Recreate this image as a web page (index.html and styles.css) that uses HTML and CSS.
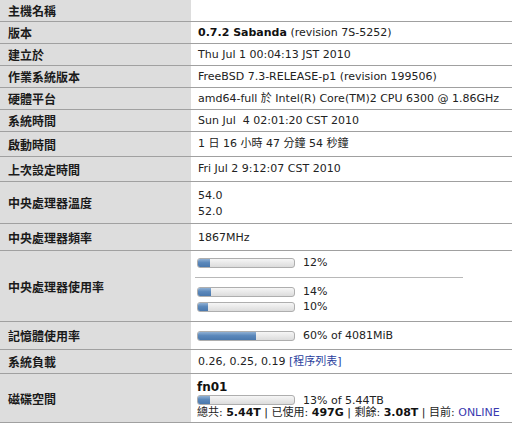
FILE: index.html
```html
<!DOCTYPE html>
<html lang="zh-Hant">
<head>
<meta charset="utf-8">
<title>系統資訊</title>
<link rel="stylesheet" href="styles.css">
</head>
<body>
<div class="sysinfo">
  <div class="row"><div class="label">主機名稱</div><div class="value"></div></div>
  <div class="row"><div class="label">版本</div><div class="value"><b>0.7.2 Sabanda</b> (revision 7S-5252)</div></div>
  <div class="row"><div class="label">建立於</div><div class="value">Thu Jul 1 00:04:13 JST 2010</div></div>
  <div class="row"><div class="label">作業系統版本</div><div class="value">FreeBSD 7.3-RELEASE-p1 (revision 199506)</div></div>
  <div class="row"><div class="label">硬體平台</div><div class="value">amd64-full 於 Intel(R) Core(TM)2 CPU 6300 @ 1.86GHz</div></div>
  <div class="row"><div class="label">系統時間</div><div class="value">Sun Jul&nbsp; 4 02:01:20 CST 2010</div></div>
  <div class="row row-roomy"><div class="label">啟動時間</div><div class="value">1 日 16 小時 47 分鐘 54 秒鐘</div></div>
  <div class="row row-roomy"><div class="label">上次設定時間</div><div class="value">Fri Jul 2 9:12:07 CST 2010</div></div>
  <div class="row"><div class="label">中央處理器溫度</div><div class="value value-temp"><div class="line">54.0</div><div class="line">52.0</div></div></div>
  <div class="row"><div class="label">中央處理器頻率</div><div class="value value-freq">1867MHz</div></div>
  <div class="row"><div class="label">中央處理器使用率</div>
    <div class="value value-cpu">
      <div class="barline"><div class="bar"><div class="fill" style="width:12%"></div></div><span>12%</span></div>
      <div class="sep"></div>
      <div class="barline"><div class="bar"><div class="fill" style="width:14%"></div></div><span>14%</span></div>
      <div class="barline"><div class="bar"><div class="fill" style="width:10%"></div></div><span>10%</span></div>
    </div>
  </div>
  <div class="row"><div class="label">記憶體使用率</div>
    <div class="value value-mem">
      <div class="barline"><div class="bar"><div class="fill" style="width:60%"></div></div><span>60% of 4081MiB</span></div>
    </div>
  </div>
  <div class="row"><div class="label">系統負載</div><div class="value value-load">0.26, 0.25, 0.19 <a class="link" href="#">[程序列表]</a></div></div>
  <div class="row"><div class="label">磁碟空間</div>
    <div class="value value-disk">
      <div class="disk-name">fn01</div>
      <div class="barline barline-tight"><div class="bar"><div class="fill" style="width:13%"></div></div><span>13% of 5.44TB</span></div>
      <div class="disk-stats">總共: <b>5.44T</b> | 已使用: <b>497G</b> | 剩餘: <b>3.08T</b> | 目前: <span class="online">ONLINE</span></div>
    </div>
  </div>
</div>
</body>
</html>
```
FILE: styles.css
```css
html, body {
  margin: 0;
  padding: 0;
  background: #ffffff;
}

body {
  font-family: "DejaVu Sans", "Noto Sans CJK TC", sans-serif;
  font-size: 11px;
  color: #222222;
}

.sysinfo {
  width: 512px;
}

.row {
  display: grid;
  grid-template-columns: 191px 1fr;
  border-bottom: 1px solid #a0a0a0;
}

.label {
  background: #dddddd;
  display: flex;
  align-items: center;
  padding: 0 8px;
  font-family: "Noto Sans CJK TC", sans-serif;
  font-weight: 700;
  font-size: 12px;
  color: #1a1a1a;
  min-height: 21px;
}

.value {
  padding: 4px 7px;
  line-height: 13px;
  white-space: nowrap;
}

.row-roomy .value {
  padding: 5px 7px 6px;
}

.value b {
  font-weight: 700;
  color: #111111;
}

.value-temp {
  padding: 6px 7px 3px;
}

.value-temp .line {
  line-height: 16px;
}

.value-freq {
  padding: 7px 7px 6px;
}

.value-cpu {
  padding: 4px 7px 7px 6px;
}

.value-mem {
  padding: 6px 7px 6px 6px;
}

.value-load {
  padding: 5px 7px 5px;
}

.value-disk {
  padding: 6px 7px 3px 6px;
}

.barline {
  display: flex;
  align-items: center;
  height: 15px;
  gap: 8px;
}

.barline-tight {
  height: 12px;
}

.bar {
  width: 96px;
  height: 8px;
  border: 1px solid #aeaeae;
  border-radius: 3px;
  background: linear-gradient(#f6f6f6, #dcdcdc);
  overflow: hidden;
  flex: none;
}

.fill {
  height: 100%;
  background: linear-gradient(#8fb0d4 0%, #5b88bb 45%, #4a78ad 100%);
}

.sep {
  width: 268px;
  margin: 7px 0 6px -2px;
  border-top: 1px solid #b8b8b8;
}

.link {
  color: #2b3f9e;
  text-decoration: none;
}

.disk-name {
  font-weight: 700;
  font-size: 12px;
  line-height: 14px;
  color: #111111;
}

.disk-stats {
  line-height: 13px;
}

.online {
  color: #3a3ab0;
}
```
